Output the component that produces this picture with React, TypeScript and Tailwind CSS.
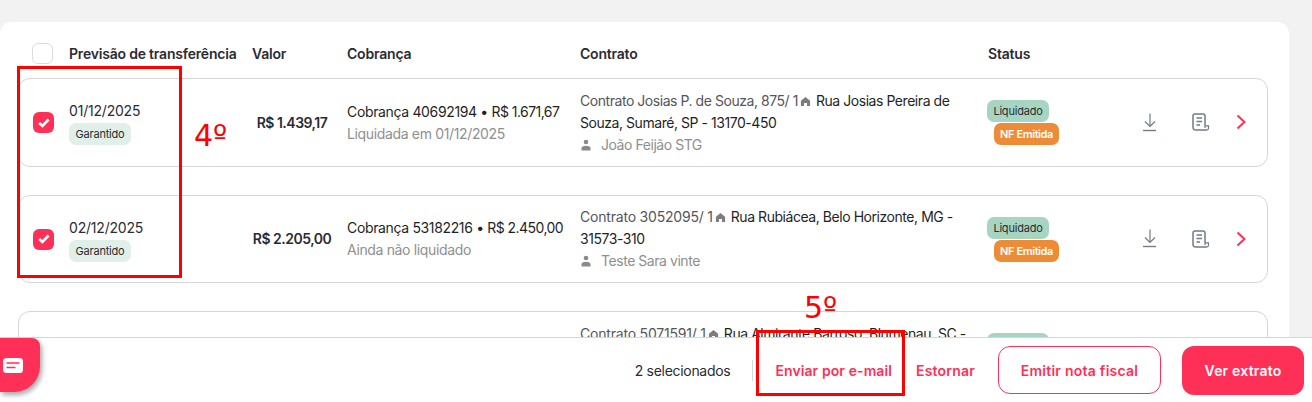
import type { ReactNode } from "react";

type Row = {
  date: string;
  valor: string;
  cobranca: string;
  total: string;
  liquidacao: string;
  contrato: string;
  contratoClass: string;
  endereco: string;
  pessoa: string;
  checked: boolean;
};

const rows: Row[] = [
  {
    date: "01/12/2025",
    valor: "R$ 1.439,17",
    cobranca: "Cobrança 40692194",
    total: "R$ 1.671,67",
    liquidacao: "Liquidada em 01/12/2025",
    contrato: "Contrato Josias P. de Souza, 875/ 1",
    contratoClass: "tracking-[-0.45px]",
    endereco: "Rua Josias Pereira de Souza, Sumaré, SP - 13170-450",
    pessoa: "João Feijão STG",
    checked: true,
  },
  {
    date: "02/12/2025",
    valor: "R$ 2.205,00",
    cobranca: "Cobrança 53182216",
    total: "R$ 2.450,00",
    liquidacao: "Ainda não liquidado",
    contrato: "Contrato 3052095/ 1",
    contratoClass: "tracking-[-0.2px]",
    endereco: "Rua Rubiácea, Belo Horizonte, MG - 31573-310",
    pessoa: "Teste Sara vinte",
    checked: true,
  },
  {
    date: "03/12/2025",
    valor: "R$ 1.120,00",
    cobranca: "Cobrança 50715910",
    total: "R$ 1.300,00",
    liquidacao: "Ainda não liquidado",
    contrato: "Contrato 5071591/ 1",
    contratoClass: "tracking-[-0.2px]",
    endereco: "Rua Almirante Barroso, Blumenau, SC - 89035-400",
    pessoa: "Teste",
    checked: false,
  },
];

function HomeIcon() {
  return (
    <svg viewBox="0 0 12 12" className="ml-[2px] mr-[5px] inline-block h-[11px] w-[11px] align-[-1px] text-[#7d7d7d]" fill="currentColor">
      <path d="M6 1 11 5.200V11H7.600V7.600H4.400V11H1V5.200Z" />
    </svg>
  );
}

function PersonIcon() {
  return (
    <svg viewBox="0 0 12 12" className="h-[12px] w-[12px] text-[#8a8a8a]" fill="currentColor">
      <circle cx="6" cy="3" r="2.300" />
      <path d="M1.500 11.500V9.300C1.500 7.800 3 6.800 6 6.800s4.500 1 4.500 2.500v2.200Z" />
    </svg>
  );
}

function DownloadIcon() {
  return (
    <svg viewBox="0 0 16 19" className="h-[19px] w-[16px] text-[#737b86]" fill="none" stroke="currentColor" strokeWidth="1.200">
      <path d="M8 0.500V13.500M3 8.500l5 5 5-5" />
      <path d="M1 17.500h13" strokeWidth="1.400" />
    </svg>
  );
}

function DocIcon() {
  return (
    <svg viewBox="0 0 18 18" className="h-[18px] w-[18px] text-[#737b86]" fill="none" stroke="currentColor" strokeWidth="1.500">
      <path d="M13 12.500V3a2 2 0 0 0-2-2H3a2 2 0 0 0-2 2v11.500a2.500 2.500 0 0 0 2.500 2.500H15" strokeLinejoin="round" />
      <path d="M4.500 5h5.500M4.500 8.500h5.500M4.500 12h3.500" />
      <path d="M13 15v-2.200h3.500V15a2 2 0 0 1-1.500 2" strokeWidth="1.200" />
    </svg>
  );
}

function ChevronIcon() {
  return (
    <svg viewBox="0 0 10 16" className="h-[16px] w-[10px] text-[#ff3057]" fill="none" stroke="currentColor" strokeWidth="2">
      <path d="M1.500 1.500 8.500 8l-7 6.500" />
    </svg>
  );
}

function Checkbox({ checked }: { checked: boolean }) {
  if (!checked) {
    return <div className="h-[21px] w-[21px] rounded-[6px] border border-[#dcdcdc] bg-white" />;
  }
  return (
    <div className="flex h-[21px] w-[21px] items-center justify-center rounded-[6px] bg-[#ff3057]">
      <svg viewBox="0 0 12 10" className="h-[10px] w-[12px]" fill="none" stroke="white" strokeWidth="2.600">
        <path d="M1.200 5 4.400 8l6.200-6.500" />
      </svg>
    </div>
  );
}

function Pill({ className, children }: { className: string; children: ReactNode }) {
  return (
    <span className={`flex h-[22px] items-center justify-center rounded-[7px] text-[11px] ${className}`}>
      {children}
    </span>
  );
}

function ContractRow({ row }: { row: Row }) {
  return (
    <div className="grid h-[88.5px] shrink-0 grid-cols-[50px_183px_95px_233px_408px_1fr] items-center rounded-[12px] border border-[#d6d6d6] bg-white">
      <div className="pl-[14px] pt-[1px]">
        <Checkbox checked={row.checked} />
      </div>
      <div className="flex flex-col items-start">
        <span className="text-[14px] leading-[24px] text-[#2b2b33]">{row.date}</span>
        <Pill className="w-[62px] bg-[#e0efe8] text-[#2b2b33]">Garantido</Pill>
      </div>
      <div className="w-[80px] whitespace-nowrap text-center text-[14px] font-semibold tracking-[-0.5px] text-[#2b2b33]">{row.valor}</div>
      <div className="pt-[0.5px] text-[14px] leading-[22px] tracking-[-0.35px]">
        <div className="whitespace-nowrap text-[#1f1f26]">
          {row.cobranca} • <span className="tracking-[-0.55px]">{row.total}</span>
        </div>
        <div className="text-[#8f8f8f]">{row.liquidacao}</div>
      </div>
      <div className="w-[395px] pt-[0.5px] text-[14px] leading-[22px] tracking-[-0.45px] text-[#1f1f26]">
        <div>
          <span className={`text-[#55555c] ${row.contratoClass}`}>{row.contrato}</span>
          <HomeIcon />
          {row.endereco}
        </div>
        <div className="flex items-center gap-[9px] text-[#8f8f8f]">
          <PersonIcon />
          {row.pessoa}
        </div>
      </div>
      <div className="flex items-center">
        <div className="flex w-[72px] -translate-x-[1px] flex-col items-start gap-[1px] pt-[1px]">
          <Pill className="w-[62px] bg-[#a8d5c2] text-[#2b2b33]">Liquidado</Pill>
          <Pill className="ml-[7px] w-[65px] bg-[#ee8b36] font-semibold tracking-[-0.4px] text-white">NF Emitida</Pill>
        </div>
        <div className="ml-[82px] flex items-center">
          <DownloadIcon />
          <div className="ml-[34px]">
            <DocIcon />
          </div>
          <div className="ml-[26px]">
            <ChevronIcon />
          </div>
        </div>
      </div>
    </div>
  );
}

export default function App() {
  return (
    <div className="relative h-[402px] w-full overflow-hidden bg-[#f2f2f2] font-['Inter',sans-serif] tracking-[-0.2px]">
      <div className="mt-[22px] h-[380px] w-[1289px] rounded-t-[12px] bg-white px-[18px]">
        <div className="grid h-[56px] w-[1250px] grid-cols-[51px_183px_95px_233px_408px_1fr] items-center pt-[6px] text-[14px] font-semibold text-[#2b2b33]">
          <div className="pl-[14px]">
            <Checkbox checked={false} />
          </div>
          <div>Previsão de transferência</div>
          <div>Valor</div>
          <div>Cobrança</div>
          <div>Contrato</div>
          <div>Status</div>
        </div>
        <div className="flex w-[1250px] flex-col gap-[28px]">
          {rows.map((r) => (
            <ContractRow key={r.date} row={r} />
          ))}
        </div>
      </div>

      {/* barra fixa de ações */}
      <div className="absolute inset-x-0 bottom-0 flex h-[65px] items-center justify-end border-t border-[#d6d6d6] bg-white pr-[8px] text-[14px]">
        <span className="tracking-[-0.3px] text-[#2b2b33]">2 selecionados</span>
        <span className="ml-[22px] h-[21px] w-px bg-[#d6d6d6]" />
        <button className="ml-[22px] font-semibold tracking-[0.1px] text-[#ff3057]">Enviar por e-mail</button>
        <button className="ml-[24px] font-semibold tracking-[0.2px] text-[#ff3057]">Estornar</button>
        <button className="ml-[23px] h-[48px] w-[163px] rounded-[12px] border border-[#ff3057] font-semibold tracking-[0.25px] text-[#ff3057]">
          Emitir nota fiscal
        </button>
        <button className="ml-[21px] h-[49px] w-[122px] rounded-[12px] bg-[#ff3057] font-semibold tracking-[0.2px] text-white">
          Ver extrato
        </button>
      </div>

      {/* botão do chat */}
      <div className="absolute left-0 top-[338px] flex h-[54px] w-[40px] items-center rounded-tr-[8px] rounded-br-[26px] bg-[#ff3057] pl-[3px] shadow-[2px_3px_5px_rgba(0,0,0,0.35)]">
        <svg viewBox="0 0 20 15" className="h-[15px] w-[20px]">
          <rect width="20" height="15" rx="3.500" fill="white" />
          <path d="M3.500 5h13M3.500 9.500h9" stroke="#ff3057" strokeWidth="1.300" />
        </svg>
      </div>

      {/* marcações em vermelho */}
      <div className="absolute left-[17px] top-[66px] h-[212px] w-[165px] border-[3px] border-[#ff0000]" />
      <div className="absolute left-[756px] top-[330px] h-[66px] w-[149px] border-[3px] border-[#ff0000]" />
      <span className="absolute left-[194px] top-[116px] font-['DejaVu_Sans',sans-serif] text-[30px] font-normal leading-[40px] tracking-normal text-[#ff0000]">4º</span>
      <span className="absolute left-[804px] top-[288px] font-['DejaVu_Sans',sans-serif] text-[30px] font-normal leading-[40px] tracking-normal text-[#ff0000]">5º</span>
    </div>
  );
}
